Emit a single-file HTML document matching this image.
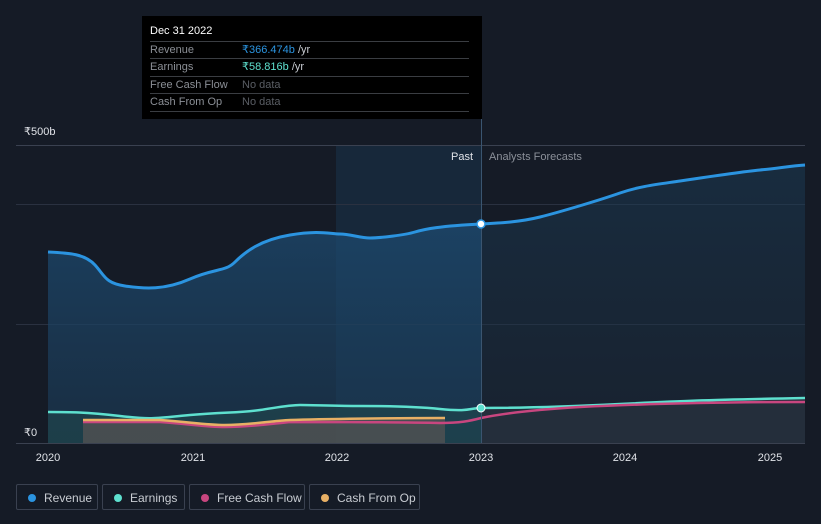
<!DOCTYPE html>
<html><head><style>
body{margin:0;background:#151b26;font-family:"Liberation Sans",sans-serif;}
.wrap{position:relative;width:821px;height:524px;overflow:hidden;}
.tt{position:absolute;left:142px;top:16px;width:340px;height:103px;background:#000;font-size:11px;color:#8b8f96;}
.tt .r{position:absolute;left:8px;width:319px;border-top:1px solid #3a3d42;height:17px;line-height:17px;}
.tt .v{position:absolute;left:92px;}
.leg{position:absolute;top:484px;height:26px;border:1px solid #3a4150;border-radius:2px;color:#c8ccd2;font-size:12px;line-height:26px;box-sizing:border-box;}
.leg i{position:absolute;left:11px;top:9px;width:8px;height:8px;border-radius:50%;}
.leg span{position:absolute;left:27px;}
</style></head><body><div class="wrap">
<svg width="821" height="524" style="position:absolute;left:0;top:0">
<defs>
<linearGradient id="g1" x1="0" y1="0" x2="0" y2="1"><stop offset="0" stop-color="#1d4a70" stop-opacity=".75"/><stop offset="1" stop-color="#1b3a55" stop-opacity=".6"/></linearGradient>
<linearGradient id="g2" x1="0" y1="0" x2="0" y2="1"><stop offset="0" stop-color="#1c3d58" stop-opacity=".5"/><stop offset="1" stop-color="#1c2c3d" stop-opacity=".4"/></linearGradient>
</defs>
<rect x="336" y="145" width="145" height="298" fill="#17283a"/>
<rect x="16" y="145" width="789" height="1" fill="#3a4150"/>
<rect x="16" y="204" width="789" height="1" fill="#2a3140"/>
<rect x="16" y="324" width="789" height="1" fill="#2a3140"/>
<path d="M48,252 C70,253 85,254 95,265 S105,283 125,286 S165,290 190,279 S225,272 235,262 S260,240 290,235 S330,234 340,234 S360,238 370,238 S405,235 415,232 S440,226 481,224 L481,443 L48,443Z" fill="url(#g1)"/>
<path d="M481,224 C500,223 520,222 540,217 S600,200 620,193 S660,184 680,181 S740,172 760,170 S790,166 805,165 L805,443 L481,443Z" fill="url(#g2)"/>
<path d="M48,412 C70,412 85,412 120,416 S155,418 190,415 S240,413 260,410 S290,405 300,405 S340,406 360,406 S410,406 440,409 S470,408 481,408 L481,443 L48,443Z" fill="#1f4a4f" opacity=".6"/>
<path d="M83,421 L160,421 C190,423 205,426 225,426 S270,423 290,421 S330,419 445,418 L445,443 L83,443Z" fill="#6a5a55" opacity=".55"/>
<path d="M481,408 L805,398 L805,443 L481,443Z" fill="#2a3340" opacity=".7"/>
<path d="M48,252 C70,253 85,254 95,265 S105,283 125,286 S165,290 190,279 S225,272 235,262 S260,240 290,235 S330,234 340,234 S360,238 370,238 S405,235 415,232 S440,226 481,224 C500,223 520,222 540,217 S600,200 620,193 S660,184 680,181 S740,172 760,170 S790,166 805,165" fill="none" stroke="#2b94e0" stroke-width="3"/>
<path d="M48,412 C70,412 85,412 120,416 S155,418 190,415 S240,413 260,410 S290,405 300,405 S340,406 360,406 S410,406 440,409 S470,408 481,408 C520,408 560,407 620,404 S700,400 805,398" fill="none" stroke="#5ee0cf" stroke-width="2.5"/>
<path d="M83,422 L160,422 C190,424 205,427 225,427 C250,427 270,424 290,422 C320,422 400,422 440,423 C460,423 470,421 481,418 C500,414 530,410 580,407 C640,404 720,402 805,402" fill="none" stroke="#c8467f" stroke-width="2.5"/>
<path d="M83,420 L160,420 C190,422 205,425 225,425 C250,425 270,421 290,420 C320,419 400,418 445,418" fill="none" stroke="#e8b065" stroke-width="2.5"/>
<rect x="481" y="119" width="1" height="324" fill="#3a5570"/>
<rect x="16" y="443" width="789" height="1" fill="#3a4150"/>
<circle cx="481" cy="224" r="4" fill="#fff" stroke="#2b94e0" stroke-width="1.5"/>
<circle cx="481" cy="408" r="4" fill="#5ee0cf" stroke="#fff" stroke-width="1"/>
<g font-size="11" fill="#e0e3e8">
<text x="24" y="135">₹500b</text><text x="24" y="436">₹0</text>
<text x="473" y="160" text-anchor="end">Past</text>
<text x="489" y="160" fill="#8b9099">Analysts Forecasts</text>
<text x="48" y="461" text-anchor="middle">2020</text><text x="193" y="461" text-anchor="middle">2021</text>
<text x="337" y="461" text-anchor="middle">2022</text><text x="481" y="461" text-anchor="middle">2023</text>
<text x="625" y="461" text-anchor="middle">2024</text><text x="770" y="461" text-anchor="middle">2025</text>
</g>
</svg>
<div class="tt">
<div style="position:absolute;left:8px;top:9px;color:#fff;">Dec 31 2022</div>
<div class="r" style="top:25px">Revenue<span class="v" style="color:#2b94e0">₹366.474b <span style="color:#c8ccd2">/yr</span></span></div>
<div class="r" style="top:42px">Earnings<span class="v" style="color:#5ee0cf">₹58.816b <span style="color:#c8ccd2">/yr</span></span></div>
<div class="r" style="top:60px">Free Cash Flow<span class="v" style="color:#5a5e65">No data</span></div>
<div class="r" style="top:77px;border-bottom:1px solid #3a3d42">Cash From Op<span class="v" style="color:#5a5e65">No data</span></div>
</div>
<div class="leg" style="left:16px;width:82px"><i style="background:#2b94e0"></i><span>Revenue</span></div>
<div class="leg" style="left:102px;width:83px"><i style="background:#5ee0cf"></i><span>Earnings</span></div>
<div class="leg" style="left:189px;width:116px"><i style="background:#c8467f"></i><span>Free Cash Flow</span></div>
<div class="leg" style="left:309px;width:111px"><i style="background:#e8b065"></i><span>Cash From Op</span></div>
</div></body></html>
